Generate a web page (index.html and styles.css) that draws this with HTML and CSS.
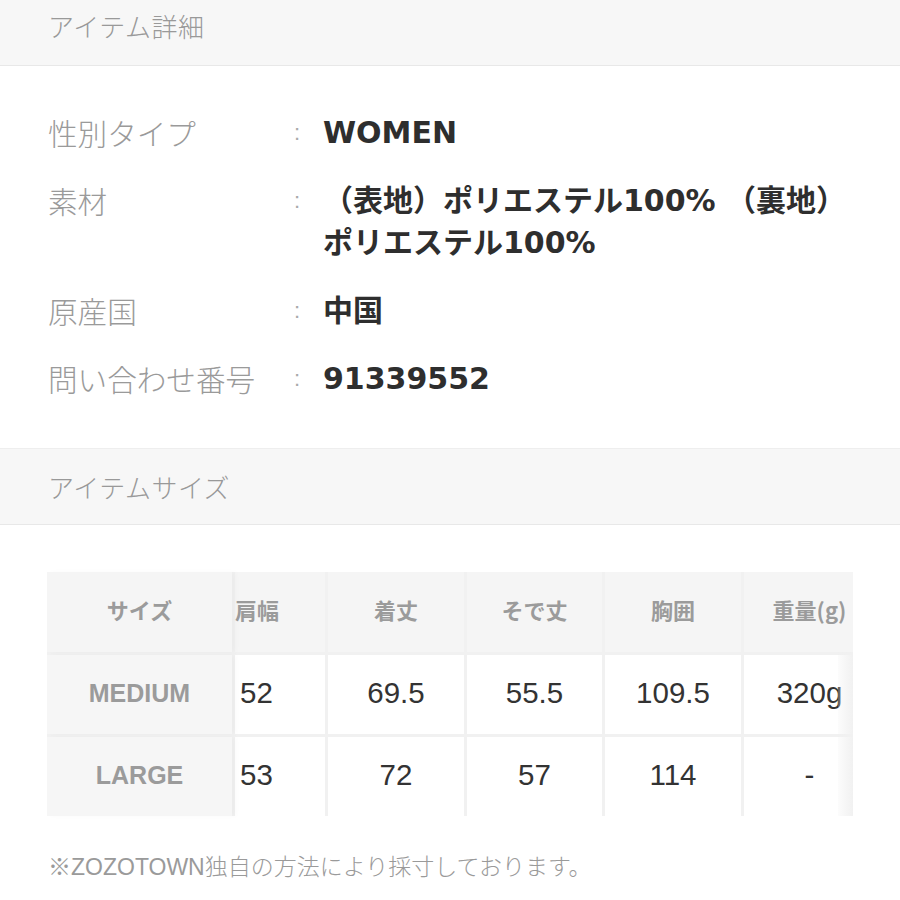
FILE: index.html
```html
<!DOCTYPE html>
<html lang="ja">
<head>
<meta charset="utf-8">
<title>アイテム詳細</title>
<link rel="stylesheet" href="styles.css">
</head>
<body>
<section class="panel">
  <h2 class="panel-title">アイテム詳細</h2>
  <dl class="details">
    <div class="detail-row">
      <dt class="detail-label">性別タイプ</dt>
      <dd class="detail-colon">:</dd>
      <dd class="detail-value">WOMEN</dd>
    </div>
    <div class="detail-row">
      <dt class="detail-label">素材</dt>
      <dd class="detail-colon">:</dd>
      <dd class="detail-value">（表地）ポリエステル100% （裏地）ポリエステル100%</dd>
    </div>
    <div class="detail-row">
      <dt class="detail-label">原産国</dt>
      <dd class="detail-colon">:</dd>
      <dd class="detail-value">中国</dd>
    </div>
    <div class="detail-row">
      <dt class="detail-label">問い合わせ番号</dt>
      <dd class="detail-colon">:</dd>
      <dd class="detail-value">91339552</dd>
    </div>
  </dl>
</section>

<section class="panel">
  <h2 class="panel-title panel-title-bordered">アイテムサイズ</h2>
  <div class="size-table">
    <div class="cell head sticky">サイズ</div>
    <div class="cell head left">肩幅</div>
    <div class="cell head">着丈</div>
    <div class="cell head">そで丈</div>
    <div class="cell head">胸囲</div>
    <div class="cell head last">重量(g)</div>

    <div class="cell rowhead sticky">MEDIUM</div>
    <div class="cell data left">52</div>
    <div class="cell data">69.5</div>
    <div class="cell data">55.5</div>
    <div class="cell data">109.5</div>
    <div class="cell data last">320g</div>

    <div class="cell rowhead sticky">LARGE</div>
    <div class="cell data left">53</div>
    <div class="cell data">72</div>
    <div class="cell data">57</div>
    <div class="cell data">114</div>
    <div class="cell data last">-</div>
  </div>
  <p class="note">※ZOZOTOWN独自の方法により採寸しております。</p>
</section>
</body>
</html>
```

FILE: styles.css
```css
* { box-sizing: border-box; }

html, body {
  margin: 0;
  padding: 0;
  background: #ffffff;
}

body {
  width: 900px;
  font-family: "Liberation Sans", "Noto Sans CJK JP", sans-serif;
  color: #333333;
}

.panel-title {
  margin: 0;
  height: 66px;
  padding-left: 48px;
  padding-bottom: 14px;
  display: flex;
  align-items: center;
  background: #f7f7f7;
  border-bottom: 1px solid #e8e8e8;
  font-family: "Noto Sans CJK JP", sans-serif;
  font-size: 26px;
  font-weight: 300;
  color: #999999;
  letter-spacing: 0.5px;
}

.panel-title-bordered {
  height: 77px;
  border-top: 1px solid #eeeeee;
  padding-bottom: 0;
  padding-top: 0;
}

.details {
  margin: 0;
  padding: 46px 48px 48px 48px;
  display: flex;
  flex-direction: column;
  gap: 26px;
}

.detail-row {
  display: grid;
  grid-template-columns: 240px 18px 1fr;
  line-height: 42px;
}

.detail-label {
  margin: 0;
  font-family: "Noto Sans CJK JP", sans-serif;
  font-size: 29.6px;
  font-weight: 300;
  color: #9a9a9a;
  white-space: nowrap;
}

.detail-colon {
  margin: 0;
  text-align: center;
  font-size: 22px;
  color: #aaaaaa;
}

.detail-value {
  margin: 0;
  padding-left: 17px;
  font-family: "DejaVu Sans", "Noto Sans CJK JP", sans-serif;
  font-size: 30px;
  font-weight: 700;
  color: #2e2e2e;
}

.size-table {
  position: relative;
  margin: 47px 47px 0 47px;
  display: grid;
  grid-template-columns: 185px 90px 136px 135px 136px 109px;
  grid-template-rows: 80px 79px 79px;
  gap: 3px;
  background: #f1f1f1;
}

.size-table::after {
  content: "";
  position: absolute;
  top: 80px;
  right: 0;
  bottom: 0;
  width: 15px;
  background: linear-gradient(to right, rgba(240,240,240,0.2), #f1f1f1);
}

.cell {
  display: flex;
  align-items: center;
  justify-content: center;
}

.head {
  background: #f5f5f5;
  padding-bottom: 7px;
  font-family: "Noto Sans CJK JP", sans-serif;
  font-size: 22px;
  font-weight: 700;
  color: #9b9b9b;
}

.head.last {
  padding-left: 22px;
  white-space: nowrap;
}

.rowhead {
  background: #f6f6f6;
  padding-bottom: 3px;
  font-size: 25px;
  font-weight: 700;
  color: #9b9b9b;
}

.sticky {
  position: relative;
  z-index: 1;
  box-shadow: 4px 0 5px rgba(0, 0, 0, 0.025);
}

.data {
  background: #ffffff;
  padding-bottom: 3px;
  font-size: 29.5px;
  font-weight: 400;
  color: #333333;
}

.left {
  justify-content: flex-start;
}

.data.left {
  padding-left: 5px;
}

.data.last {
  padding-left: 22px;
}

.note {
  margin: 32px 0 0 48px;
  font-family: "Liberation Sans", "Noto Sans CJK JP", sans-serif;
  font-size: 23px;
  font-weight: 300;
  color: #9a9a9a;
}
```
